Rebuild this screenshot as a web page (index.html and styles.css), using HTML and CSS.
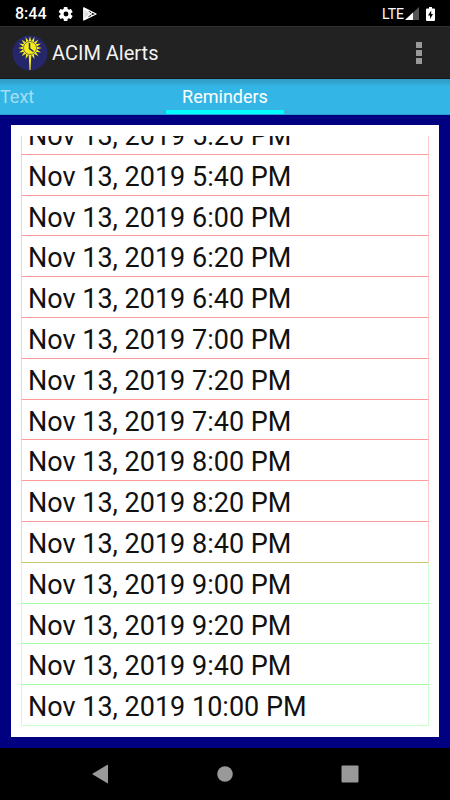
FILE: index.html
```html
<!DOCTYPE html>
<html lang="en">
<head>
<meta charset="utf-8">
<meta name="viewport" content="width=device-width, initial-scale=1">
<title>ACIM Alerts</title>
<link rel="stylesheet" href="styles.css">
</head>
<body>
<div class="status">
  <span class="clock">8:44</span>
  <svg class="gear" width="16" height="16" viewBox="0 0 24 24"><path fill="#fff" fill-rule="evenodd" d="M19.4 13a7.800 7.800 0 0 0 0-2l2.300-1.700c.2-.2.300-.5.100-.7l-2.200-3.800c-.1-.3-.4-.4-.7-.3l-2.600 1.100a8 8 0 0 0-1.800-1L14.100 1.800c0-.2-.3-.4-.5-.4h-4.300c-.3 0-.5.2-.5.5l-.4 2.700a8 8 0 0 0-1.800 1L4 4.500c-.2-.1-.5 0-.7.200L1.200 8.500c-.2.300-.1.600.1.700L3.600 11a7.800 7.800 0 0 0 0 2l-2.300 1.800c-.2.100-.2.400-.1.700l2.200 3.700c.1.300.4.400.6.300l2.700-1.100a8 8 0 0 0 1.700 1l.4 2.800c.1.300.3.400.5.400h4.300c.3 0 .5-.2.500-.4l.4-2.800a8 8 0 0 0 1.800-1l2.600 1.100c.3.100.6 0 .7-.3l2.200-3.700c.1-.3.1-.5-.1-.7zM12 15.700a3.700 3.700 0 1 1 0-7.400 3.700 3.700 0 0 1 0 7.400z"/></svg>
  <svg width="14" height="14" viewBox="0 0 14 14"><path fill="#ddd" d="M.5.500 8 6.500.500 13z"/><path fill="none" stroke="#fff" stroke-width="1.300" stroke-linejoin="round" d="M.8.900 13 7 .8 13zM.8.900 9.500 9M.8 13 9.500 5"/></svg>
  <span class="network">LTE</span>
  <svg width="14" height="13" viewBox="0 0 14 13"><path fill="#555" d="M14 0v13H0z"/><path fill="#fff" d="M8 5.500V13H0z"/></svg>
  <svg class="battery" width="9" height="14" viewBox="0 0 9 14"><path fill="#fff" d="M3 0h3v1.500h2q1 0 1 1V13q0 1-1 1H1q-1 0-1-1V2.500q0-1 1-1h2z"/><path fill="#000" d="M5.200 3.500 2 8.500h2v3.500l3-5H5.200z"/></svg>
</div>
<header class="appbar">
  <svg class="logo" width="36" height="36" viewBox="0 0 36 36">
    <circle cx="18" cy="18" r="17.500" fill="#26276b"/>
    <g fill="#f5ec1b">
      <path d="M16.600 18h2.800l-.9 17h-1z"/>
      <path id="ray" d="M16.400 7h3.200L18 1.200z"/>
      <use href="#ray" transform="rotate(22.500 18 13)"/><use href="#ray" transform="rotate(45 18 13)"/>
      <use href="#ray" transform="rotate(67.500 18 13)"/><use href="#ray" transform="rotate(90 18 13)"/>
      <use href="#ray" transform="rotate(112.500 18 13)"/><use href="#ray" transform="rotate(135 18 13)"/>
      <use href="#ray" transform="rotate(157.500 18 13)"/><use href="#ray" transform="rotate(202.500 18 13)"/>
      <use href="#ray" transform="rotate(225 18 13)"/><use href="#ray" transform="rotate(247.500 18 13)"/>
      <use href="#ray" transform="rotate(270 18 13)"/><use href="#ray" transform="rotate(292.500 18 13)"/>
      <use href="#ray" transform="rotate(315 18 13)"/><use href="#ray" transform="rotate(337.500 18 13)"/>
      <circle cx="18" cy="13" r="6.500" stroke="#26276b" stroke-width=".6"/>
    </g>
    <path d="M17.500 8v5.500l4 3" fill="none" stroke="#26276b" stroke-width="1.500"/>
  </svg>
  <h1 class="title">ACIM Alerts</h1>
  <button class="more" aria-label="More options"><svg width="6" height="24" viewBox="0 0 6 24"><path fill="#999" d="M0 1h6v6H0zM0 9h6v6H0zM0 17h6v6H0z"/></svg></button>
</header>
<nav class="tabs">
  <a class="tab previous" href="#text">Text</a>
  <a class="tab selected" href="#reminders" aria-current="page">Reminders</a>
</nav>
<main class="content">
  <section class="card" id="reminders">
    <div class="viewport">
      <ul class="list">
        <li class="past">Nov 13, 2019 5:20 PM</li>
        <li class="past">Nov 13, 2019 5:40 PM</li>
        <li class="past">Nov 13, 2019 6:00 PM</li>
        <li class="past">Nov 13, 2019 6:20 PM</li>
        <li class="past">Nov 13, 2019 6:40 PM</li>
        <li class="past">Nov 13, 2019 7:00 PM</li>
        <li class="past">Nov 13, 2019 7:20 PM</li>
        <li class="past">Nov 13, 2019 7:40 PM</li>
        <li class="past">Nov 13, 2019 8:00 PM</li>
        <li class="past">Nov 13, 2019 8:20 PM</li>
        <li class="past latest">Nov 13, 2019 8:40 PM</li>
        <li class="next">Nov 13, 2019 9:00 PM</li>
        <li class="next">Nov 13, 2019 9:20 PM</li>
        <li class="next">Nov 13, 2019 9:40 PM</li>
        <li class="next final">Nov 13, 2019 10:00 PM</li>
      </ul>
    </div>
  </section>
</main>
<footer class="navbar">
  <button aria-label="Back"><svg width="18" height="20" viewBox="0 0 18 20"><path fill="#999" d="M16 1v18q0 .5-1 0L.8 10.500q-.8-.5 0-1L15 1q1-.5 1 0z"/></svg></button>
  <button aria-label="Home"><svg width="18" height="18" viewBox="0 0 18 18"><circle cx="9" cy="9" r="7.800" fill="#999"/></svg></button>
  <button aria-label="Overview"><svg width="18" height="18" viewBox="0 0 18 18"><rect x=".5" y=".5" width="17" height="17" rx="1" fill="#999"/></svg></button>
</footer>
</body>
</html>
```
FILE: styles.css
```css
* { box-sizing: border-box; }
body {
  margin: 0;
  height: 100vh;
  display: flex;
  flex-direction: column;
  background: #000;
  color: #fff;
  font-family: Roboto, "Liberation Sans", sans-serif;
}
svg { display: block; flex: none; }
button { padding: 0; border: 0; background: none; }
.status {
  flex: none;
  height: 26px;
  display: flex;
  align-items: center;
  padding: 1px 15px 0;
}
.clock { font-size: 16px; font-weight: 500; }
.gear { margin: 0 9px 0 11px; }
.network { margin: 0 1px 0 auto; font-size: 14px; }
.battery { margin-left: 7px; }
.appbar {
  flex: none;
  height: 53px;
  display: flex;
  align-items: center;
  padding: 0 24px 0 12px;
  gap: 4px;
  background: #222;
  border-top: 1px solid #303030;
  border-bottom: 1px solid #181818;
}
.title { margin: 0; font-size: 20px; font-weight: 400; color: #f3f3f3; }
.more { margin-left: auto; width: 14px; display: flex; justify-content: center; }
.tabs {
  flex: none;
  height: 36px;
  display: grid;
  grid-template-columns: 1fr auto 1fr;
  background: linear-gradient(#2f9ac4, #33b5e5 8px);
  border-bottom: 1px solid #2a9fcf;
}
.tab { font-size: 18px; line-height: 35px; color: #fff; text-decoration: none; }
.previous { color: #a3def4; }
.selected { padding: 0 16px; background: linear-gradient(#0ff, #0ff) bottom / 100% 4px no-repeat; }
.content {
  flex: 1;
  min-height: 0;
  display: flex;
  padding: 10px 11px 11px;
  background: #000080;
}
.card { flex: 1; min-width: 0; display: flex; padding: 11px 10px; background: #fff; }
.viewport {
  flex: 1;
  display: flex;
  flex-direction: column;
  justify-content: flex-end;
  overflow: hidden;
}
.list {
  flex: none;
  height: 612px;
  margin: 0;
  padding: 0;
  display: grid;
  grid-auto-rows: 1fr;
  list-style: none;
  color: #111;
  font-size: 27px;
  line-height: 33px;
}
.list li { padding: 6px 0 0 6px; border-style: solid; border-width: 0 1px 1px; }
.list .past { border-color: #ff9c9c #ffcccc; }
.list .latest { border-bottom-color: #c8c868; }
.list .next { border-color: #a0ffa0 #ccffcc; }
.list .final { border-bottom-color: #ccffcc; }
.navbar {
  flex: none;
  height: 52px;
  display: grid;
  grid-template-columns: repeat(3, 1fr);
  width: 83%;
  margin: 0 auto;
}
.navbar button { display: flex; align-items: center; justify-content: center; }
```
